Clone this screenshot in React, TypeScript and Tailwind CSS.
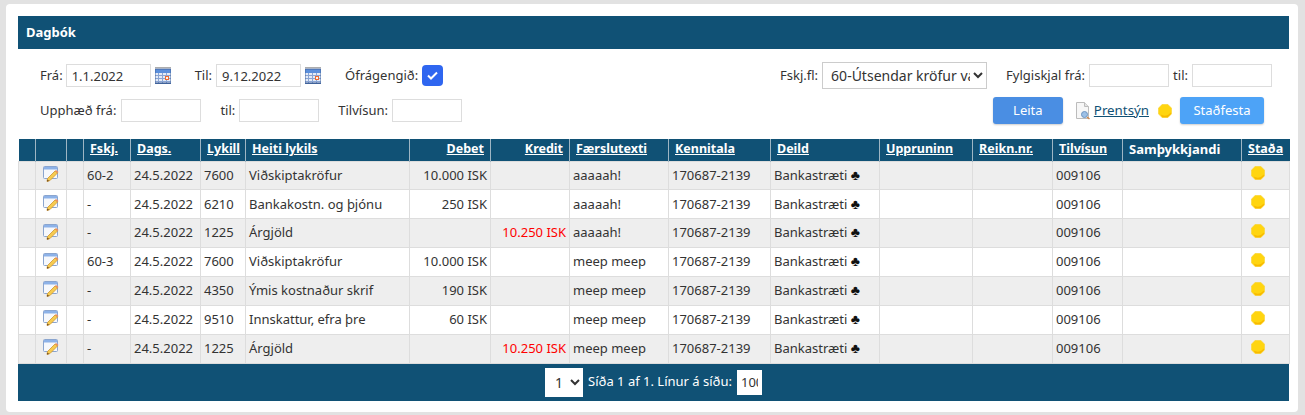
const Cal = () => (
  <svg width="16" height="17" viewBox="0 0 16 17" className="shrink-0">
    <rect x="0" y="3" width="16" height="14" fill="#e4ebf7" />
    <path d="M0.5 0.5h15" stroke="#5a5a5a" strokeWidth="1" strokeDasharray="1 1" />
    <rect x="0" y="1" width="16" height="1" fill="#a9b4c8" />
    <rect x="0" y="2" width="16" height="4" fill="#5b8fdc" />
    <path d="M0 8.5h16M0 11.5h16M0 14.5h16M3.5 6v11M7.5 6v11M11.5 6v11" stroke="#8aa5d4" strokeWidth="1" />
    <rect x="0" y="15.5" width="16" height="1.5" fill="#3d5f96" />
    <rect x="0.25" y="2.25" width="15.5" height="14.5" fill="none" stroke="#45679f" strokeWidth="0.5" />
    <rect x="10.5" y="9.5" width="3" height="3" fill="#fff3e6" stroke="#ec6a34" />
  </svg>
);

const Edit = () => (
  <svg width="16" height="16" viewBox="0 0 16 16">
    <rect x="0.5" y="0.5" width="14" height="12" rx="1" fill="#f6f8fc" stroke="#8aa5cf" />
    <rect x="1" y="1" width="13" height="2.5" fill="#8db2e8" />
    <path d="M4.5 12.5 L12 5 L14.5 7 L7 14.5 L4 15.5 Z" fill="#f6cb50" stroke="#cf9530" strokeWidth="0.8" />
    <path d="M12 5 L13 4 L15.5 6 L14.5 7 Z" fill="#f08c5a" />
    <path d="M4.3 13.5 L4 15.5 L6.2 15.1 Z" fill="#6b4a20" />
  </svg>
);

const Preview = () => (
  <svg width="16" height="18" viewBox="0 0 16 18" className="shrink-0">
    <path d="M1.5 0.5H9.5L13.5 4.5V16.5H1.5Z" fill="#f7f7f7" stroke="#bcbcbc" />
    <path d="M9.5 0.5V4.5H13.5" fill="#e4e4e4" stroke="#bcbcbc" />
    <circle cx="9.5" cy="12.5" r="3" fill="#9cc0e6" stroke="#6c94c0" />
    <path d="M12 15L14.5 17" stroke="#d08a50" strokeWidth="1.6" />
  </svg>
);

const Dot = () => (
  <svg width="14" height="14" viewBox="0 0 14 14" className="shrink-0">
    <path d="M4.2 0.3H9.8L13.7 4.2V9.8L9.8 13.7H4.2L0.3 9.8V4.2Z" fill="#ffd510" stroke="#f7d24a" strokeWidth="0.5" />
    <path d="M2.5 10.5 C6 12.5 10 12 12.5 8.5 L13 10 L9.5 13.3 H4.5Z" fill="#f8b900" />
  </svg>
);

const inputCls = "h-[23px] border border-[#dddddd] bg-white px-[5px] text-[13px] text-[#333333] outline-none";

const Field = ({ label, value = "", w, cls = "", gap = "mr-[4px]" }: { label: string; value?: string; w: string; cls?: string; gap?: string }) => (
  <div className={`flex items-center ${cls}`}>
    <span className={gap}>{label}</span>
    <input readOnly value={value} className={`${inputCls} ${w}`} />
  </div>
);

const cols = [17, 31, 17, 47, 70, 45, 164, 81, 79, 99, 102, 109, 93, 80, 70, 119, 48];

const heads: { t: string; right?: boolean; plain?: boolean }[] = [
  { t: "" }, { t: "" }, { t: "" },
  { t: "Fskj." }, { t: "Dags." }, { t: "Lykill" }, { t: "Heiti lykils" },
  { t: "Debet", right: true }, { t: "Kredit", right: true },
  { t: "Færslutexti" }, { t: "Kennitala" }, { t: "Deild" }, { t: "Uppruninn" },
  { t: "Reikn.nr." }, { t: "Tilvísun" }, { t: "Samþykkjandi", plain: true }, { t: "Staða" },
];

const rows = [
  ["60-2", "7600", "Viðskiptakröfur", "10.000 ISK", "", "aaaaah!"],
  ["-", "6210", "Bankakostn. og þjónu", "250 ISK", "", "aaaaah!"],
  ["-", "1225", "Árgjöld", "", "10.250 ISK", "aaaaah!"],
  ["60-3", "7600", "Viðskiptakröfur", "10.000 ISK", "", "meep meep"],
  ["-", "4350", "Ýmis kostnaður skrif", "190 ISK", "", "meep meep"],
  ["-", "9510", "Innskattur, efra þre", "60 ISK", "", "meep meep"],
  ["-", "1225", "Árgjöld", "", "10.250 ISK", "meep meep"],
];

const td = "border border-[#dddddd] px-[3px] align-middle whitespace-nowrap overflow-hidden";

export default function App() {
  return (
    <div className="h-[415px] w-[1305px] overflow-hidden bg-[#e2e2e2] pt-[4px] pl-[6px] text-[13px] text-[#333333] [font-family:'Noto_Sans',sans-serif]">
      <div className="h-[408px] w-[1292px] rounded-[4px] bg-white pt-[12px] pl-[12px]">
        <div className="flex h-[33px] w-[1271px] items-center bg-[#105175] pl-[8px] text-[13px] font-bold text-white">Dagbók</div>

        <div className="flex h-[90px] w-[1271px] flex-col pr-[17px] pl-[22px]">
          <div className="mt-[13px] flex h-[27px] items-center">
            <Field label="Frá:" value="1.1.2022" w="w-[85px]" gap="mr-[3px]" />
            <span className="ml-[4px]"><Cal /></span>
            <Field label="Til:" value="9.12.2022" w="w-[85px]" cls="ml-[24px]" />
            <span className="ml-[4px]"><Cal /></span>
            <span className="ml-[24px]">Ófrágengið:</span>
            <div className="ml-[4px] flex h-[21px] w-[21px] items-center justify-center rounded-[4px] bg-[#2f66f0]">
              <svg width="11" height="9" viewBox="0 0 11 9"><path d="M1 4.5L4 7.5L10 1.5" fill="none" stroke="#fff" strokeWidth="2" /></svg>
            </div>
            <span className="mr-[4px] ml-auto">Fskj.fl:</span>
            <select className="h-[27px] w-[165px] border border-[#cccccc] bg-white pl-[4px] text-[14px] text-[#333333]">
              <option>60-Útsendar kröfur vanskil</option>
            </select>
            <Field label="Fylgiskjal frá:" w="w-[80px]" cls="ml-[19px]" />
            <Field label="til:" w="w-[80px]" cls="ml-[4px]" />
          </div>
          <div className="mt-[8px] flex h-[27px] items-center">
            <Field label="Upphæð frá:" w="w-[80px]" gap="mr-[5px]" />
            <Field label="til:" w="w-[80px]" cls="ml-[19px]" />
            <Field label="Tilvísun:" w="w-[70px]" cls="ml-[19px]" />
            <button className="ml-auto h-[27px] w-[70px] rounded-[3px] bg-[#4a8ee3] text-[13px] text-white shadow-[0_1px_2px_rgba(0,0,0,0.2)]">Leita</button>
            <a className="ml-[12px] flex items-center text-[#105175] underline">
              <Preview />
              <span className="ml-[3px] text-[13.3px]">Prentsýn</span>
            </a>
            <span className="ml-[9px]"><Dot /></span>
            <button className="mr-[8px] ml-[8px] h-[27px] w-[84px] rounded-[3px] bg-[#4da3f7] text-[13px] text-white shadow-[0_1px_2px_rgba(0,0,0,0.2)]">Staðfesta</button>
          </div>
        </div>

        <table className="w-[1271px] table-fixed border-collapse">
          <colgroup>
            {cols.map((c, i) => <col key={i} style={{ width: c }} />)}
          </colgroup>
          <thead>
            <tr className="h-[22px] bg-[#105175] text-[12.5px] font-bold text-white">
              {heads.map((h, i) => (
                <th key={i} className={`border-x border-[#9fb6c4] px-[6px] whitespace-nowrap first:border-l-0 last:border-r-0 ${h.right ? "text-right" : "text-left"} ${h.plain ? "text-[13px]" : "underline"}`}>{h.t}</th>
              ))}
            </tr>
          </thead>
          <tbody>
            {rows.map((r, i) => (
              <tr key={i} className={`h-[28.86px] ${i % 2 === 0 ? "bg-[#eeeeee]" : "bg-white"}`}>
                <td className={td}></td>
                <td className={td}><div className="flex justify-center pb-[3px]"><Edit /></div></td>
                <td className={td}></td>
                <td className={td}>{r[0]}</td>
                <td className={td}>24.5.2022</td>
                <td className={td}>{r[1]}</td>
                <td className={td}>{r[2]}</td>
                <td className={`${td} text-right`}>{r[3]}</td>
                <td className={`${td} text-right text-[#ff0000]`}>{r[4]}</td>
                <td className={td}>{r[5]}</td>
                <td className={td}>170687-2139</td>
                <td className={td}>Bankastræti <span className="text-[14px] leading-[13px] text-[#111111]">♣</span></td>
                <td className={td}></td>
                <td className={td}></td>
                <td className={td}>009106</td>
                <td className={td}></td>
                <td className={td}><div className="flex pb-[4px] pl-[6px]"><Dot /></div></td>
              </tr>
            ))}
          </tbody>
        </table>

        <div className="flex h-[37px] w-[1271px] items-center justify-center bg-[#105175] text-white">
          <select className="h-[29px] w-[38px] bg-white pl-[6px] text-[14px] text-[#333333]">
            <option>1</option>
          </select>
          <span className="mx-[5px]">Síða 1 af 1. Línur á síðu:</span>
          <input readOnly value="100" className="h-[25px] w-[25px] bg-white px-[4px] text-[13px] text-[#333333] outline-none" />
        </div>
      </div>
    </div>
  );
}
